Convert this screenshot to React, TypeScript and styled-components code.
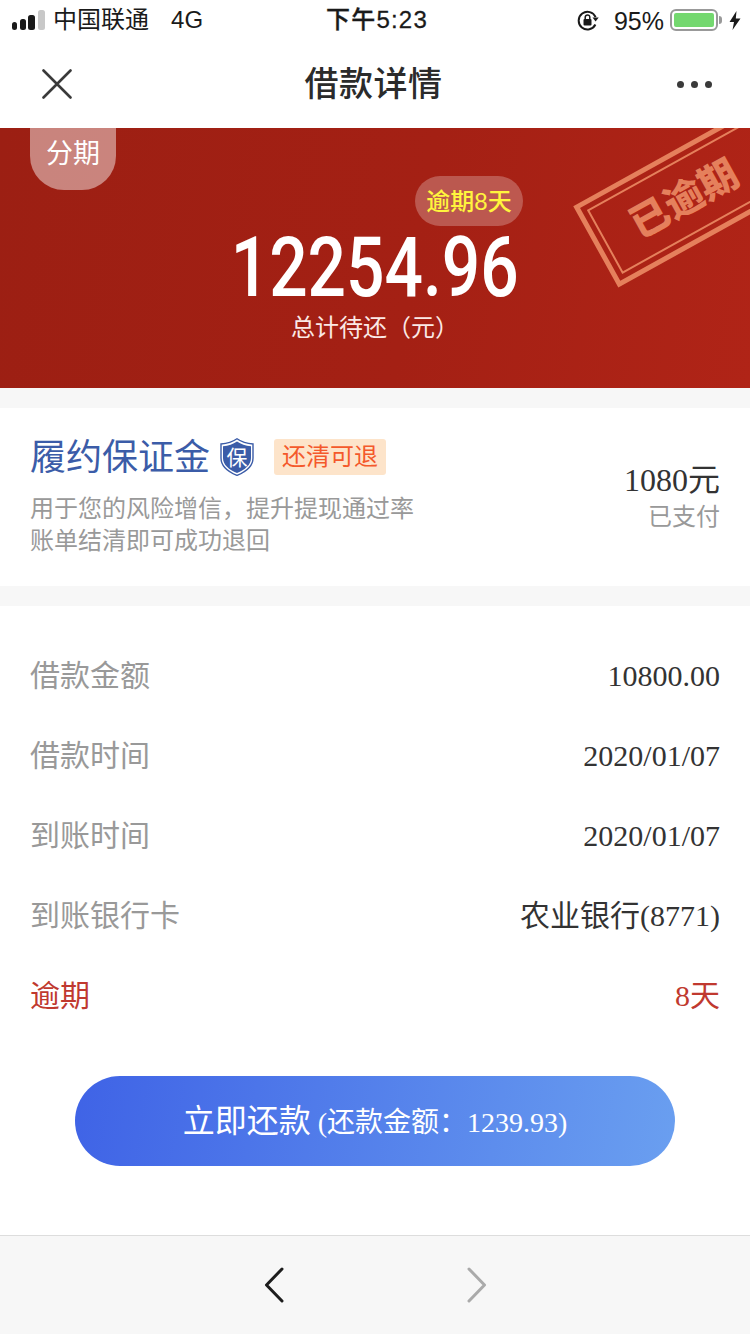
import React from "react";
import styled, { createGlobalStyle } from "styled-components";

const CJK = `"Noto Sans CJK SC"`;
const SANS = `"Liberation Sans", ${CJK}, sans-serif`;
const SERIF = `"Liberation Serif", ${CJK}, serif`;

const Global = createGlobalStyle`
  html, body { margin: 0; padding: 0; background: #fff; }
  body { font-family: ${SANS}; }
  * { box-sizing: border-box; }
`;

const Page = styled.div`
  width: 750px;
  height: 1334px;
  display: flex;
  flex-direction: column;
  background: #fff;
  overflow: hidden;
`;

const StatusBar = styled.div`
  height: 40px;
  padding: 0 9px 0 12px;
  display: grid;
  grid-template-columns: 1fr auto 1fr;
  align-items: center;
  font-size: 24px;
  line-height: 30px;
  color: #1a1a1a;
`;
const StatusLeft = styled.div`
  display: flex;
  align-items: center;
`;
const Carrier = styled.span`
  margin-left: 8px;
  white-space: pre;
  word-spacing: 0.7px;
`;
const Clock = styled.div`
  font-weight: 500;
  margin-left: 1px;
  letter-spacing: 1.2px;
  -webkit-text-stroke: 0.3px #1a1a1a;
`;
const StatusRight = styled.div`
  display: flex;
  align-items: center;
  justify-content: flex-end;
`;
const Percent = styled.span`
  margin: 1px 6px 0 15px;
  font-size: 25px;
`;
const Battery = styled.div`
  width: 48px;
  height: 22px;
  border: 2px solid #999;
  border-radius: 6px;
  padding: 2px;
  position: relative;
  &::after {
    content: "";
    position: absolute;
    right: -6px;
    top: 5px;
    width: 3px;
    height: 8px;
    background: #999;
    border-radius: 0 3px 3px 0;
  }
`;
const BatteryFill = styled.div`
  height: 100%;
  background: #74d86f;
  border-radius: 2px;
`;
const Bolt = styled.svg`
  margin-left: 11px;
  display: block;
`;

const NavBar = styled.div`
  height: 88px;
  padding: 0 38px 0 42px;
  display: grid;
  grid-template-columns: 1fr auto 1fr;
  align-items: center;
`;
const NavTitle = styled.div`
  font-size: 34px;
  font-weight: 500;
  line-height: 44px;
  letter-spacing: 0.5px;
  color: #2b2b2b;
  margin-right: 7px;
`;
const NavMore = styled.div`
  display: flex;
  justify-content: flex-end;
  gap: 7px;
`;
const Dot = styled.i`
  width: 7px;
  height: 7px;
  border-radius: 50%;
  background: #3a3a3a;
`;

const Hero = styled.div`
  position: relative;
  height: 260px;
  padding-top: 48px;
  overflow: hidden;
  display: flex;
  flex-direction: column;
  align-items: center;
  background: linear-gradient(100deg, #9c1f13 0%, #a42014 55%, #b02417 100%);
  color: #fff;
`;
const PlanBadge = styled.div`
  position: absolute;
  left: 30px;
  top: 0;
  width: 86px;
  height: 62px;
  padding-top: 5px;
  border-radius: 0 0 34px 34px;
  background: rgba(255, 255, 255, 0.45);
  font-size: 27px;
  line-height: 42px;
  text-align: center;
`;
const OverdueTag = styled.div`
  align-self: flex-end;
  margin-right: 227px;
  width: 108px;
  height: 50px;
  border-radius: 25px;
  background: rgba(255, 255, 255, 0.25);
  color: #fff53d;
  font-size: 24px;
  font-weight: 500;
  line-height: 52px;
  text-align: center;
  white-space: nowrap;
`;
const Amount = styled.div`
  height: 62px;
  margin-top: 10px;
  font-family: Roboto, sans-serif;
  font-size: 83px;
  font-weight: 500;
  line-height: 64px;
  transform: scaleX(0.815);
  white-space: nowrap;
`;
const AmountLabel = styled.div`
  margin-top: 12px;
  font-size: 24px;
  line-height: 36px;
  color: #fbe9e6;
`;
const Stamp = styled.div`
  position: absolute;
  left: 582px;
  top: 19px;
  width: 220px;
  height: 93px;
  padding: 5px;
  border: 5px solid #e5805c;
  transform: rotate(-29deg);
`;
const StampInner = styled.div`
  height: 100%;
  padding-left: 30px;
  border: 2px solid #e5805c;
  color: #e5805c;
  font-size: 39px;
  font-weight: 900;
  line-height: 72px;
  white-space: nowrap;
`;

const Gap = styled.div`
  height: 20px;
  flex: none;
  background: #f7f7f7;
`;

const Deposit = styled.section`
  height: 178px;
  padding: 26px 30px 0;
  display: flex;
  justify-content: space-between;
`;
const DepositMain = styled.div`
  display: flex;
  flex-direction: column;
`;
const DepositHead = styled.div`
  display: flex;
  align-items: center;
  height: 46px;
`;
const DepositTitle = styled.div`
  margin-top: 2px;
  font-size: 36px;
  line-height: 46px;
  color: #3b5ca8;
`;
const Shield = styled.svg`
  margin-left: 10px;
  display: block;
`;
const RefundTag = styled.div`
  margin-left: 20px;
  width: 112px;
  height: 36px;
  border-radius: 3px;
  background: #fde4ca;
  color: #f4592b;
  font-size: 24px;
  line-height: 35px;
  text-align: center;
`;
const DepositNote = styled.div`
  margin-top: 13px;
  font-size: 24px;
  line-height: 32px;
  color: #999;
`;
const DepositSide = styled.div`
  margin-top: 26px;
  text-align: right;
`;
const DepositValue = styled.div`
  font-family: ${SERIF};
  font-size: 32px;
  line-height: 40px;
  color: #333;
`;
const DepositState = styled.div`
  margin-top: 2px;
  font-size: 24px;
  line-height: 30px;
  color: #999;
`;

const Details = styled.section`
  padding: 30px 30px 0;
`;
const Row = styled.div`
  height: 80px;
  display: flex;
  align-items: center;
  justify-content: space-between;
  line-height: 40px;
`;
const RowLabel = styled.span<{ $alert?: boolean }>`
  font-size: 30px;
  color: ${(p) => (p.$alert ? "#c0392f" : "#999")};
`;
const RowValue = styled.span<{ $alert?: boolean }>`
  font-family: ${SERIF};
  font-size: 30px;
  color: ${(p) => (p.$alert ? "#c0392f" : "#333")};
`;

const RepayButton = styled.button`
  display: block;
  flex: none;
  width: 600px;
  height: 90px;
  margin: 40px auto 0;
  padding: 0 0 6px 0;
  border: 0;
  border-radius: 45px;
  background: linear-gradient(100deg, #3f63e6 0%, #6a9ff0 100%);
  color: #fff;
  font-family: ${SERIF};
  font-size: 28px;
  white-space: pre;
`;
const RepayMain = styled.span`
  font-size: 32px;
`;

const BottomBar = styled.div`
  margin-top: auto;
  height: 99px;
  border-top: 1px solid #ddd;
  background: #f7f7f7;
  display: flex;
  justify-content: center;
  align-items: center;
  gap: 183px;
`;

export default function App() {
  return (
    <Page>
      <Global />
      <StatusBar>
        <StatusLeft>
          <svg width="33" height="20" viewBox="0 0 33 20">
            <rect x="0" y="12" width="5" height="8" rx="2.5" fill="#1a1a1a" />
            <rect x="8" y="9" width="6" height="11" rx="2.5" fill="#1a1a1a" />
            <rect x="16" y="5" width="7" height="15" rx="2.5" fill="#1a1a1a" />
            <rect x="26" y="0" width="7" height="20" rx="2.5" fill="#c8c8c8" />
          </svg>
          <Carrier>中国联通   4G</Carrier>
        </StatusLeft>
        <Clock>下午5:23</Clock>
        <StatusRight>
          <svg width="22" height="22" viewBox="0 0 22 22">
            <path d="M18.6 8.2A8.8 8.8 0 1 0 18.4 15.5" fill="none" stroke="#1a1a1a" strokeWidth="2" />
            <path d="M15.5 8.5h6.2l-3.1 4z" fill="#1a1a1a" />
            <rect x="6.5" y="10" width="8" height="6.5" rx="1" fill="#1a1a1a" />
            <path d="M8.2 10V8.2a2.3 2.3 0 0 1 4.6 0V10" fill="none" stroke="#1a1a1a" strokeWidth="1.5" />
          </svg>
          <Percent>95%</Percent>
          <Battery>
            <BatteryFill />
          </Battery>
          <Bolt width="12" height="19" viewBox="0 0 12 19">
            <path d="M7.5 0 0.5 11H5L3.5 19 11.5 7.5H6.8z" fill="#1a1a1a" />
          </Bolt>
        </StatusRight>
      </StatusBar>

      <NavBar>
        <svg width="30" height="30" viewBox="0 0 30 30">
          <path d="M1.5 1.5 28.5 28.5M28.5 1.5 1.5 28.5" stroke="#3a3a3a" strokeWidth="2.6" strokeLinecap="round" />
        </svg>
        <NavTitle>借款详情</NavTitle>
        <NavMore>
          <Dot />
          <Dot />
          <Dot />
        </NavMore>
      </NavBar>

      <Hero>
        <PlanBadge>分期</PlanBadge>
        <Stamp>
          <StampInner>已逾期</StampInner>
        </Stamp>
        <OverdueTag>逾期8天</OverdueTag>
        <Amount>12254.96</Amount>
        <AmountLabel>总计待还（元）</AmountLabel>
      </Hero>

      <Gap />

      <Deposit>
        <DepositMain>
          <DepositHead>
            <DepositTitle>履约保证金</DepositTitle>
            <Shield width="34" height="38" viewBox="0 0 34 38">
              <path d="M17 0.8C21.5 4 26.5 5.6 33 6V20C33 28 26 33.8 17 37.4 8 33.8 1 28 1 20V6C7.5 5.6 12.5 4 17 0.8Z" fill="#fff" stroke="#3b5ca8" strokeWidth="1.4" />
              <path d="M17 3.6C21 6.4 25.5 7.8 31 8.3V20C31 26.8 25 31.8 17 35 9 31.8 3 26.8 3 20V8.3C8.5 7.8 13 6.4 17 3.6Z" fill="#3b5ca8" />
              <text x="17" y="27" fontSize="21" fill="#fff" textAnchor="middle" fontFamily={CJK}>保</text>
            </Shield>
            <RefundTag>还清可退</RefundTag>
          </DepositHead>
          <DepositNote>
            用于您的风险增信，提升提现通过率
            <br />
            账单结清即可成功退回
          </DepositNote>
        </DepositMain>
        <DepositSide>
          <DepositValue>1080元</DepositValue>
          <DepositState>已支付</DepositState>
        </DepositSide>
      </Deposit>

      <Gap />

      <Details>
        <Row>
          <RowLabel>借款金额</RowLabel>
          <RowValue>10800.00</RowValue>
        </Row>
        <Row>
          <RowLabel>借款时间</RowLabel>
          <RowValue>2020/01/07</RowValue>
        </Row>
        <Row>
          <RowLabel>到账时间</RowLabel>
          <RowValue>2020/01/07</RowValue>
        </Row>
        <Row>
          <RowLabel>到账银行卡</RowLabel>
          <RowValue>农业银行(8771)</RowValue>
        </Row>
        <Row>
          <RowLabel $alert>逾期</RowLabel>
          <RowValue $alert>8天</RowValue>
        </Row>
      </Details>

      <RepayButton>
        <RepayMain>立即还款</RepayMain> (还款金额：1239.93)
      </RepayButton>

      <BottomBar>
        <svg width="20" height="36" viewBox="0 0 20 36">
          <path d="M18 2 2.5 18 18 34" fill="none" stroke="#1d1d1d" strokeWidth="3" strokeLinecap="round" strokeLinejoin="round" />
        </svg>
        <svg width="20" height="36" viewBox="0 0 20 36">
          <path d="M2 2 17.5 18 2 34" fill="none" stroke="#aaa" strokeWidth="3" strokeLinecap="round" strokeLinejoin="round" />
        </svg>
      </BottomBar>
    </Page>
  );
}
